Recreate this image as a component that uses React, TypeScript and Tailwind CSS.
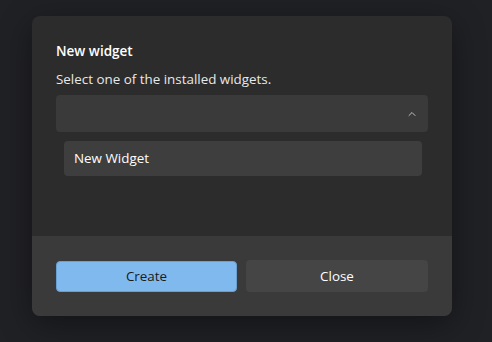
import { ChevronUp } from 'lucide-react'

export default function App() {
  return (
    <div
      className="w-[492px] h-[342px] bg-[#202125] pt-4 pl-8"
      style={{ fontFamily: '"Segoe UI", "Open Sans", sans-serif' }}
    >
      <div className="w-[420px] h-[300px] rounded-lg overflow-hidden flex flex-col bg-[#2c2c2c] shadow-[0_8px_32px_rgba(0,0,0,0.4)]">
        {/* Body */}
        <div className="flex-1 px-6 pt-[25px]">
          <h1 className="text-[13.5px] font-semibold text-white leading-5">New widget</h1>
          <p className="mt-[8px] text-[13.4px] text-[#e8e8e8] leading-5">Select one of the installed widgets.</p>

          <div className="mt-[6px] h-[37px] rounded bg-[#3a3a3a] flex items-center justify-end pr-[10px]">
            <ChevronUp className="w-3 h-3 text-[#d0d0d0]" strokeWidth={1.75} />
          </div>

          <div className="mt-[9px] ml-2 mr-[6px] h-[35px] rounded bg-[#3e3e3e] flex items-center px-[10px]">
            <span className="text-[13.4px] text-white">New Widget</span>
          </div>
        </div>

        {/* Footer */}
        <div className="h-[80px] bg-[#3a3a3a] px-6 flex items-center gap-[9px]">
          <button className="w-[181px] h-[31px] rounded bg-[#80b9ee] border border-[#6a9fd0] text-[13.4px] text-[#1a1a1a]">
            Create
          </button>
          <button className="w-[182px] h-[32px] rounded bg-[#454545] text-[13.4px] text-white">
            Close
          </button>
        </div>
      </div>
    </div>
  )
}
